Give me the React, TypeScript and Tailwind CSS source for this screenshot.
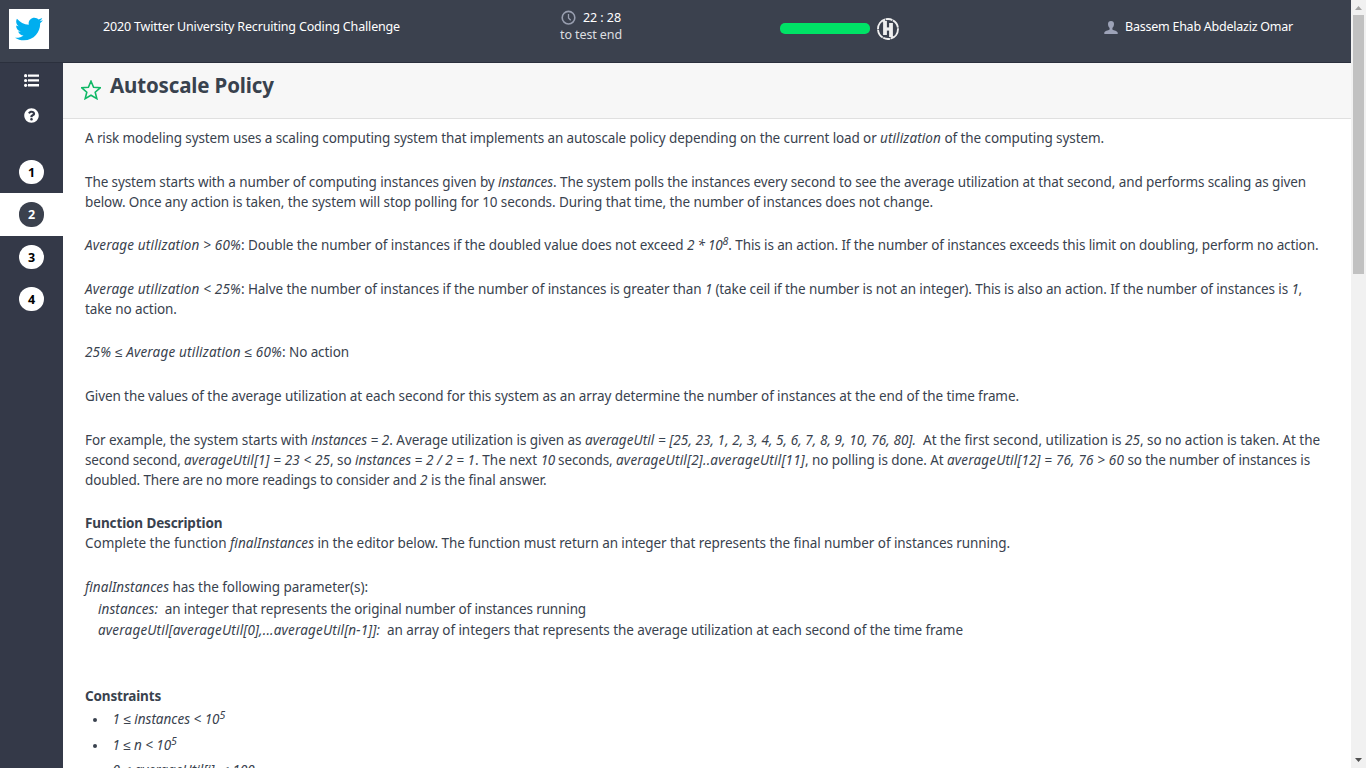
import type { ReactNode } from "react";
import { FaQuestionCircle, FaTwitter } from "react-icons/fa";

function Line({ className = "", children }: { className?: string; children: ReactNode }) {
  return <div className={`h-5 leading-5 whitespace-pre ${className}`}>{children}</div>;
}

function S({ t, children }: { t: string; children: ReactNode }) {
  return <span className={t}>{children}</span>;
}

function Em({ t = "tracking-[0.05px]", children }: { t?: string; children: ReactNode }) {
  return <em className={t}>{children}</em>;
}

function Pow({ children }: { children: ReactNode }) {
  return <em className="relative -top-[5px] text-[10.5px] leading-none">{children}</em>;
}

function Header() {
  return (
    <header className="flex h-[63px] shrink-0 border-b border-[#2b303d] bg-[#3b414e] text-[12.5px] leading-[17px] text-white">
      <div className="ml-[9px] mt-[9px] flex h-10 w-10 items-center justify-center bg-white">
        <FaTwitter className="h-7 w-7 text-[#00aeef]" />
      </div>
      <div className="ml-[54px] mt-[18px] w-[457px] whitespace-nowrap tracking-[-0.158px]">
        2020 Twitter University Recruiting Coding Challenge
      </div>
      <div className="mt-[9px] w-[220px] whitespace-nowrap">
        <div className="flex items-center">
          <svg className="ml-[1px] mr-[7px] h-[15px] w-[15px]" viewBox="0 0 15 15" fill="none" stroke="#989eaf">
            <circle cx="7.5" cy="7.7" r="6.3" strokeWidth="1.6" />
            <path d="M7.5 4v4l2.2 2.3" strokeWidth="1.3" />
          </svg>
          <span className="tracking-[-0.06px]">22 : 28</span>
        </div>
        <div className="tracking-[-0.1px] text-[#dcdde0]">to test end</div>
      </div>
      <div className="mt-[23px] h-[11px] w-[90px] rounded-[5px] bg-[#00e266]" />
      <svg className="ml-[7px] mt-[18px] h-[22px] w-[22px]" viewBox="0 0 22 22" fill="none" stroke="#efefef">
        <circle cx="11" cy="11" r="10" strokeWidth="1.9" strokeDasharray="13 0.6 7 0.6 9 0.6" />
        <path d="M8 3v14M14 5v14" strokeWidth="3.8" />
        <path d="M8 11h6" strokeWidth="3.2" />
        <path d="M5.5 4l2.500-2M14 20.500l2.500-2" strokeWidth="1.2" />
      </svg>
      <div className="ml-[205px] mt-[18px] flex whitespace-nowrap">
        <svg className="mr-[7px] mt-[3px] h-[13px] w-[14px]" viewBox="0 0 14 13" fill="#9da3b8">
          <path d="M7 0C5 0 4 1.3 4 3c0 2 .8 3 1.6 4v1.2C5.3 9.4 1.5 9.300.3 11.500V13h13.400v-1.500C12.5 9.3 8.7 9.4 8.4 8.2V7C9.2 6 10 5 10 3c0-1.7-1-3-3-3z" />
        </svg>
        <span className="tracking-[-0.239px]">Bassem Ehab Abdelaziz Omar</span>
      </div>
    </header>
  );
}

function Sidebar() {
  return (
    <nav className="w-[63px] shrink-0 bg-[#343948] text-white">
      <div className="flex h-[88px] flex-col items-center pt-[11px]">
        <svg className="h-[13px] w-[15px]" viewBox="0 0 15 13" fill="#fff">
          <circle cx="1.6" cy="1.7" r="1.6" />
          <circle cx="1.6" cy="6.5" r="1.6" />
          <circle cx="1.6" cy="11.3" r="1.6" />
          <path d="M4 .5h11v2.3H4zM4 5.3h11v2.3H4zM4 10.1h11v2.3H4z" />
        </svg>
        <FaQuestionCircle className="mt-[21px] h-[15px] w-[15px]" />
      </div>
      {[1, 2, 3, 4].map((n) => (
        <div
          key={n}
          className={`flex items-center justify-center ${n === 2 ? "h-[43px] bg-white" : "h-[42px]"}`}
        >
          <div
            className={`flex w-[25px] items-center justify-center rounded-[12px] text-[12.5px] font-bold ${
              n === 2 ? "h-[25px] bg-[#3b414e] text-white" : "h-6 bg-white text-black"
            }`}
          >
            <span className="pt-px leading-4">{n}</span>
          </div>
        </div>
      ))}
    </nav>
  );
}

function Problem() {
  return (
    <article className="pl-[22px] pt-[9px] text-[13.5px] text-[#39424e]">
      <Line>
        <S t="tracking-[-0.116px]">A risk modeling system uses a scaling computing system that implements an autoscale policy depending on the current load or </S>
        <Em t="tracking-[0.109px]">utilization</Em>
        <S t="tracking-[-0.086px]"> of the computing system.</S>
      </Line>
      <Line className="mt-6">
        <S t="tracking-[-0.1px]">The system starts with a number of computing instances given by </S>
        <Em t="tracking-[-0.087px]">instances</Em>
        <S t="tracking-[-0.091px]">. The system polls the instances every second to see the average utilization at that second, and performs scaling as given</S>
      </Line>
      <Line>
        <S t="tracking-[-0.097px]">below. Once any action is taken, the system will stop polling for 10 seconds. During that time, the number of instances does not change.</S>
      </Line>
      <Line className="mt-[23px]">
        <Em t="tracking-[0.173px]">Average utilization &gt; 60%</Em>
        <S t="tracking-[-0.066px]">: Double the number of instances if the doubled value does not exceed </S>
        <Em t="tracking-[-0.2px]">2 * 10</Em>
        <Pow>8</Pow>
        <S t="tracking-[-0.112px]">. This is an action. If the number of instances exceeds this limit on doubling, perform no action.</S>
      </Line>
      <Line className="mt-6">
        <Em t="tracking-[0.173px]">Average utilization &lt; 25%</Em>
        <S t="tracking-[-0.087px]">: Halve the number of instances if the number of instances is greater than </S>
        <Em t="tracking-[-0.5px]">1</Em>
        <S t="tracking-[-0.102px]"> (take ceil if the number is not an integer). This is also an action. If the number of instances is </S>
        <Em t="tracking-[-0.5px]">1</Em>,
      </Line>
      <Line>
        <S t="tracking-[-0.1px]">take no action.</S>
      </Line>
      <Line className="mt-[23px]">
        <Em t="tracking-[0.179px]">25% ≤ Average utilization ≤ 60%</Em>
        <S t="tracking-[-0.09px]">: No action</S>
      </Line>
      <Line className="mt-6">
        <S t="tracking-[-0.09px]">Given the values of the average utilization at each second for this system as an array determine the number of instances at the end of the time frame.</S>
      </Line>
      <Line className="mt-6">
        <S t="tracking-[-0.059px]">For example, the system starts with </S>
        <Em t="tracking-[0.003px]">instances = 2</Em>
        <S t="tracking-[-0.057px]">. Average utilization is given as </S>
        <Em t="tracking-[0.072px]">averageUtil = [25, 23, 1, 2, 3, 4, 5, 6, 7, 8, 9, 10, 76, 80].</Em>
        <S t="tracking-[0.004px]">{"  At the first second, utilization is "}</S>
        <Em t="tracking-[0.062px]">25</Em>
        <S t="tracking-[-0.057px]">, so no action is taken. At the</S>
      </Line>
      <Line>
        <S t="tracking-[-0.159px]">second second, </S>
        <Em t="tracking-[0.12px]">averageUtil[1] = 23 &lt; 25</Em>
        <S t="tracking-[-0.054px]">, so </S>
        <Em t="tracking-[0.028px]">instances = 2 / 2 = 1</Em>
        <S t="tracking-[0.03px]">. The next </S>
        <Em t="tracking-[-0.438px]">10</Em>
        <S t="tracking-[-0.12px]"> seconds, </S>
        <Em t="tracking-[0.222px]">averageUtil[2]..averageUtil[11]</Em>
        <S t="tracking-[-0.09px]">, no polling is done. At </S>
        <Em t="tracking-[0.158px]">averageUtil[12] = 76, 76 &gt; 60</Em>
        <S t="tracking-[-0.124px]"> so the number of instances is</S>
      </Line>
      <Line>
        <S t="tracking-[-0.133px]">doubled. There are no more readings to consider and </S>
        <Em>2</Em>
        <S t="tracking-[-0.047px]"> is the final answer.</S>
      </Line>
      <Line className="mt-[23px] font-bold tracking-[-0.13px]">Function Description</Line>
      <Line>
        <S t="tracking-[-0.011px]">Complete the function </S>
        <Em t="tracking-[0.042px]">finalInstances</Em>
        <S t="tracking-[-0.077px]"> in the editor below. The function must return an integer that represents the final number of instances running.</S>
      </Line>
      <Line className="mt-6">
        <Em t="tracking-[0.042px]">finalInstances</Em>
        <S t="tracking-[-0.06px]"> has the following parameter(s):</S>
      </Line>
      <Line className="mt-[2px] pl-[13px]">
        <Em t="tracking-[0.076px]">instances:</Em>
        <S t="tracking-[-0.132px]">{"  an integer that represents the original number of instances running"}</S>
      </Line>
      <Line className="mt-px pl-[13px]">
        <Em t="tracking-[0.18px]">averageUtil[averageUtil[0],...averageUtil[n-1]]:</Em>
        <S t="tracking-[-0.067px]">{"  an array of integers that represents the average utilization at each second of the time frame"}</S>
      </Line>
      <Line className="mt-[46px] font-bold tracking-[-0.165px]">Constraints</Line>
      <ul>
        <li className="mt-[3px] flex">
          <Bullet />
          <Line><Em t="tracking-[-0.015px]">1 ≤ instances &lt; 10</Em><Pow>5</Pow></Line>
        </li>
        <li className="mt-[6px] flex">
          <Bullet />
          <Line><Em t="tracking-[-0.08px]">1 ≤ n &lt; 10</Em><Pow>5</Pow></Line>
        </li>
        <li className="mt-[5px] flex">
          <Bullet />
          <Line><Em t="tracking-[0.01px]">{"0 ≤ averageUtil[i]  ≤ 100"}</Em></Line>
        </li>
      </ul>
    </article>
  );
}

function Bullet() {
  return <span className="ml-[8px] mr-[15.5px] mt-[9px] h-1 w-1 rounded-full bg-[#39424e]" />;
}

function Scrollbar() {
  return (
    <div className="flex w-[15px] shrink-0 flex-col items-center bg-[#f1f1f1]">
      <svg className="h-[15px] w-[15px]" viewBox="0 0 15 15" fill="#a3a3a3">
        <path d="M4 10L7.5 6L11 10z" />
      </svg>
      <div className="h-[259px] w-[11px] bg-[#c1c1c1]" />
      <svg className="mt-auto h-[15px] w-[15px]" viewBox="0 0 15 15" fill="#505050">
        <path d="M4 5L7.5 9L11 5z" />
      </svg>
    </div>
  );
}

export default function App() {
  return (
    <div className="flex h-screen w-full overflow-hidden bg-white font-['Noto_Sans',sans-serif]">
      <div className="flex min-w-0 flex-1 flex-col overflow-hidden">
        <Header />
        <div className="flex min-h-0 flex-1">
          <Sidebar />
          <main className="min-w-0 flex-1 overflow-hidden">
            <div className="flex h-14 border-b border-[#e0e0e0] bg-[#f7f7f7] pl-[18px]">
              <svg className="mt-[17px] h-5 w-5" viewBox="0 0 20 20" fill="none" stroke="#0fb866" strokeWidth="1.6">
                <path d="M10 1.2L12.6 7.2L19.2 7.8L14.200 12.2L15.800 18.600L10 15.2L4.200 18.600L5.800 12.2L.8 7.8L7.4 7.2z" />
              </svg>
              <h1 className="ml-[9px] mt-[8px] text-[20.5px] font-bold leading-7 tracking-[-0.15px] text-[#39424e]">
                Autoscale Policy
              </h1>
            </div>
            <Problem />
          </main>
        </div>
      </div>
      <Scrollbar />
    </div>
  );
}
